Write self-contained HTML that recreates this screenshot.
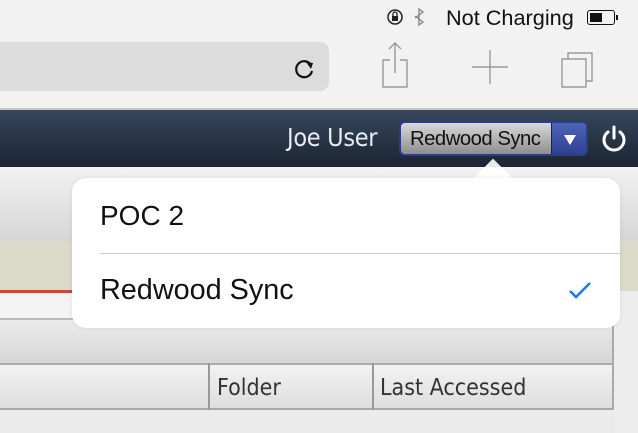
<!DOCTYPE html>
<html><head><meta charset="utf-8"><style>
*{margin:0;padding:0;box-sizing:border-box}
body{width:638px;height:433px;overflow:hidden;position:relative;background:#ebebeb;font-family:"Liberation Sans",sans-serif}
.a{position:absolute}
</style></head><body>
<div class="a" style="left:0;top:0;width:638px;height:109px;background:#f2f2f2"></div>
<div class="a" style="left:446px;top:5px;font-size:21.7px;color:#111">Not Charging</div>
<svg class="a" style="left:386px;top:7px" width="44" height="22">
<circle cx="9" cy="10" r="7" fill="none" stroke="#222" stroke-width="1.5"/>
<rect x="6" y="9" width="6" height="5" fill="#222"/><path d="M7 9V7a2 2 0 0 1 4 0v2" fill="none" stroke="#222" stroke-width="1.3"/>
<path d="M29 11l8-6-4-3v16l4-3-8-6" fill="none" stroke="#888" stroke-width="1.4"/>
</svg>
<div class="a" style="left:587px;top:10px;width:28px;height:15px;border:1.5px solid #111;border-radius:3px"><div style="margin:1.5px;width:12px;height:9px;background:#111"></div></div>
<div class="a" style="left:616px;top:15px;width:2px;height:5px;background:#111"></div>
<div class="a" style="left:0;top:42px;width:329px;height:49px;background:#dcdcdc;border-radius:0 9px 9px 0"></div>
<svg class="a" style="left:292px;top:56px" width="26" height="26"><path d="M19 9A8 8 0 1 0 20 15" fill="none" stroke="#111" stroke-width="2.2"/><path d="M14 6l7 1-2 6z" fill="#111"/></svg>
<svg class="a" style="left:376px;top:40px" width="250" height="52" fill="none" stroke="#9a9a9a" stroke-width="1.4">
<path d="M14 20H7v27h24V20h-7M19 33V3M13 9l6-6 6 6"/>
<path d="M114 10v34M96 27h36"/>
<path d="M186 19h24v28h-24zM192 19v-6h24v28h-6"/>
</svg>
<div class="a" style="left:0;top:108px;width:638px;height:2px;background:#c8c8c8"></div>
<div class="a" style="left:0;top:110px;width:638px;height:57px;background:linear-gradient(#36475c,#1b2433)"></div>
<div class="a" style="left:287px;top:123px;font-size:25px;color:#e8ecf0;letter-spacing:-0.3px;font-family:'DejaVu Sans Condensed','Liberation Sans',sans-serif;font-weight:300">Joe User</div>
<div class="a" style="left:399px;top:121px;width:189px;height:35px;border:2px solid #2a3d8a;border-radius:6px;background:linear-gradient(#d8d8d8,#8e8e8e);overflow:hidden">
<div class="a" style="left:9px;top:5px;font-size:20.3px;color:#111;letter-spacing:-0.5px">Redwood Sync</div>
<div class="a" style="left:150px;top:0;width:37px;height:33px;background:linear-gradient(#4d64b8,#2d3f8e);border-left:1px solid #223"></div>
<div class="a" style="left:163px;top:12px;width:0;height:0;border-left:6px solid transparent;border-right:6px solid transparent;border-top:10px solid #fff"></div>
</div>
<svg class="a" style="left:600px;top:124px" width="28" height="28"><path d="M8 8A10 10 0 1 0 20 8M14 3v11" fill="none" stroke="#fff" stroke-width="3" stroke-linecap="round"/></svg>
<div class="a" style="left:0;top:167px;width:638px;height:74px;background:linear-gradient(#f2f2f2,#d6d6d6)"></div>
<div class="a" style="left:0;top:241px;width:638px;height:50px;background:#dcdac8"></div>
<div class="a" style="left:0;top:290px;width:618px;height:3px;background:#c9473c"></div>
<div class="a" style="left:0;top:293px;width:618px;height:25px;background:#f4f4f4"></div>
<div class="a" style="left:0;top:318px;width:614px;height:45px;background:linear-gradient(#ececec,#d6d6d6);border-top:2px solid #bbb;border-right:2px solid #aaa"></div>
<div class="a" style="left:0;top:363px;width:614px;height:47px;background:linear-gradient(#f2f2f2,#dedede);border-top:2px solid #aaa;border-bottom:2px solid #aaa;border-right:2px solid #aaa"></div>
<div class="a" style="left:208px;top:363px;width:2px;height:47px;background:#999"></div>
<div class="a" style="left:372px;top:363px;width:2px;height:47px;background:#999"></div>
<div class="a" style="left:217px;top:375px;font-size:23px;color:#333;font-family:'DejaVu Sans Condensed','Liberation Sans',sans-serif">Folder</div>
<div class="a" style="left:380px;top:375px;font-size:23px;color:#333;font-family:'DejaVu Sans Condensed','Liberation Sans',sans-serif">Last Accessed</div>
<div class="a" style="left:614px;top:293px;width:24px;height:140px;background:#ededed"></div>
<div class="a" style="left:480px;top:164px;width:26px;height:26px;background:#fff;transform:rotate(45deg);opacity:.9"></div>
<div class="a" style="left:72px;top:178px;width:548px;height:150px;background:#fff;border-radius:14px;box-shadow:0 0 6px rgba(0,0,0,.08)"></div>
<div class="a" style="left:100px;top:200px;font-size:28px;color:#111">POC 2</div>
<div class="a" style="left:100px;top:253px;width:520px;height:1px;background:#ccc"></div>
<div class="a" style="left:100px;top:274px;font-size:28.8px;color:#111">Redwood Sync</div>
<svg class="a" style="left:566px;top:280px" width="30" height="22"><path d="M4 11l6 6L24 3" fill="none" stroke="#1a7cf5" stroke-width="2.6"/></svg>
</body></html>
